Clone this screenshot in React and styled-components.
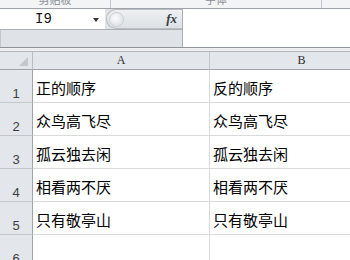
import React from "react";
import styled, { createGlobalStyle } from "styled-components";

const GlobalStyle = createGlobalStyle`
  html, body {
    margin: 0;
    padding: 0;
    background: #ffffff;
    overflow: hidden;
  }
  body {
    width: 350px;
    height: 260px;
  }
`;

const Window = styled.div`
  width: 350px;
  height: 260px;
  overflow: hidden;
  display: flex;
  flex-direction: column;
  background: #ffffff;
`;

/* ribbon bottom edge with group labels cut off */
const RibbonStrip = styled.div`
  height: 8px;
  flex: none;
  display: flex;
  background: #f3f4f6;
  border-bottom: 1px solid #9ea3a9;
  overflow: hidden;
`;

const RibbonGroup = styled.div`
  width: ${(p) => p.$width}px;
  flex: none;
  display: flex;
  justify-content: center;
  border-right: 1px solid #c5c9ce;
  overflow: hidden;
`;

const GroupLabel = styled.span`
  font-family: "Noto Sans CJK SC", sans-serif;
  font-size: 11px;
  line-height: 14px;
  margin-top: -8px;
  color: #8a8e93;
`;

const FormulaBar = styled.div`
  height: 38px;
  flex: none;
  display: grid;
  grid-template-columns: 182px 1fr;
  background: #dfe2e6;
  border-bottom: 1px solid #8f949a;
`;

const LeftPane = styled.div`
  display: flex;
  flex-direction: column;
`;

const TopRow = styled.div`
  height: 20px;
  display: flex;
  border-bottom: 1px solid #aab0b6;
`;

const NameBox = styled.div`
  width: 105px;
  flex: none;
  display: flex;
  align-items: center;
  background: #ffffff;
  position: relative;
`;

const NameText = styled.span`
  font-family: "Liberation Mono", monospace;
  font-size: 14px;
  color: #111111;
  margin-left: 35px;
`;

const DropArrow = styled.span`
  position: absolute;
  right: 6px;
  top: 9px;
  width: 0;
  height: 0;
  border-left: 3px solid transparent;
  border-right: 3px solid transparent;
  border-top: 4px solid #333333;
`;

const Pill = styled.div`
  flex: 1;
  margin-left: 1px;
  display: flex;
  align-items: center;
  justify-content: space-between;
  padding: 0 5px 0 2px;
  background: linear-gradient(#eef0f2, #dde1e5);
  border: 1px solid #b9bec3;
  border-right: none;
  border-radius: 10px 0 0 10px;
`;

const Knob = styled.span`
  width: 13px;
  height: 13px;
  border-radius: 50%;
  background: radial-gradient(circle at 40% 40%, #fbfcfd, #d6dadf);
  border: 1px solid #c9cdd2;
`;

const Fx = styled.span`
  font-family: "Liberation Serif", serif;
  font-style: italic;
  font-weight: bold;
  font-size: 13px;
  color: #3a3d40;
`;

const GrayPane = styled.div`
  flex: 1;
  border-left: 1px solid #c3c7cc;
`;

const FormulaInput = styled.div`
  background: #ffffff;
  border-left: 1px solid #a9aeb4;
`;

const Splitter = styled.div`
  height: 3px;
  flex: none;
  background: #eceef1;
  border-bottom: 1px solid #b3b8be;
`;

const Grid = styled.div`
  display: grid;
  grid-template-columns: 33px 177px 184px;
  grid-template-rows: 18px repeat(6, 33px);
`;

const Corner = styled.div`
  background: #e3e6ea;
  border-right: 1px solid #b7bcc1;
  border-bottom: 1px solid #9ea4aa;
  position: relative;
`;

const CornerMark = styled.span`
  position: absolute;
  right: 4px;
  bottom: 3px;
  width: 0;
  height: 0;
  border-left: 9px solid transparent;
  border-bottom: 9px solid #c4c8cc;
`;

const ColHeader = styled.div`
  background: #e3e6ea;
  border-right: 1px solid #c3c7cc;
  border-bottom: 1px solid #9ea4aa;
  display: flex;
  align-items: flex-end;
  justify-content: center;
  padding-bottom: 1px;
  font-family: "Liberation Serif", serif;
  font-size: 12px;
  color: #2d2f31;
`;

const RowHeader = styled.div`
  background: #e3e6ea;
  border-right: 1px solid #9ea4aa;
  border-bottom: 1px solid #c3c7cc;
  display: flex;
  align-items: flex-end;
  justify-content: center;
  padding-bottom: 1px;
  font-family: "Liberation Sans", sans-serif;
  font-size: 13px;
  color: #3c3f42;
`;

const Cell = styled.div`
  border-right: 1px solid #d8dadc;
  border-bottom: 1px solid #d8dadc;
  display: flex;
  align-items: center;
  padding: 2px 0 0 3px;
  font-family: "Noto Sans CJK SC", sans-serif;
  font-size: 15px;
  color: #000000;
  white-space: nowrap;
`;

const rows = [
  ["正的顺序", "反的顺序"],
  ["众鸟高飞尽", "众鸟高飞尽"],
  ["孤云独去闲", "孤云独去闲"],
  ["相看两不厌", "相看两不厌"],
  ["只有敬亭山", "只有敬亭山"],
  ["", ""],
];

export default function App() {
  return (
    <>
      <GlobalStyle />
      <Window>
        <RibbonStrip>
          <RibbonGroup $width={110}>
            <GroupLabel>剪贴板</GroupLabel>
          </RibbonGroup>
          <RibbonGroup $width={210}>
            <GroupLabel>字体</GroupLabel>
          </RibbonGroup>
        </RibbonStrip>

        <FormulaBar>
          <LeftPane>
            <TopRow>
              <NameBox>
                <NameText>I9</NameText>
                <DropArrow />
              </NameBox>
              <Pill>
                <Knob />
                <Fx>fx</Fx>
              </Pill>
            </TopRow>
            <GrayPane />
          </LeftPane>
          <FormulaInput />
        </FormulaBar>

        <Splitter />

        <Grid>
          <Corner>
            <CornerMark />
          </Corner>
          <ColHeader>A</ColHeader>
          <ColHeader>B</ColHeader>
          {rows.map((r, i) => (
            <React.Fragment key={i}>
              <RowHeader>{i + 1}</RowHeader>
              <Cell>{r[0]}</Cell>
              <Cell>{r[1]}</Cell>
            </React.Fragment>
          ))}
        </Grid>
      </Window>
    </>
  );
}
